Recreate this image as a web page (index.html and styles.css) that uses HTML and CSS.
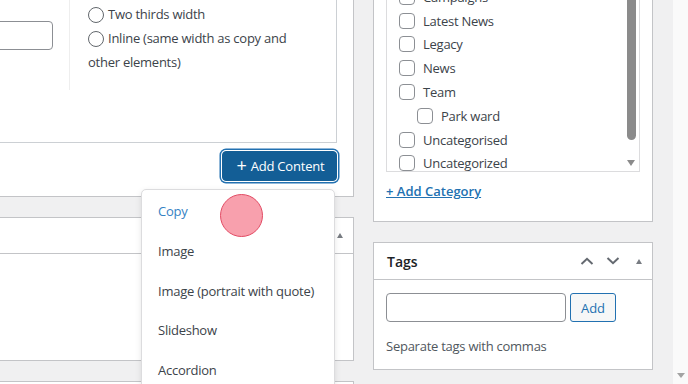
FILE: index.html
```html
<!DOCTYPE html>
<html lang="en">
<head>
<meta charset="utf-8">
<title>Edit Post</title>
<link rel="stylesheet" href="styles.css">
</head>
<body>
<div class="screen">
  <div class="wrap">
    <div class="main">
      <div class="acf">
        <div class="layout">
          <div class="field-row">
            <div class="field-input"><input class="text-input" type="text"></div>
            <div class="field-radio">
              <ul class="radio-list">
                <li><span class="radio"></span>Two thirds width</li>
                <li><span class="radio"></span>Inline (same width as copy and other elements)</li>
              </ul>
            </div>
          </div>
        </div>
        <div class="actions">
          <button class="btn-primary" type="button"><span class="plus">+</span>Add Content</button>
          <div class="menu">
            <div class="menu-item active">Copy</div>
            <div class="menu-item">Image</div>
            <div class="menu-item">Image (portrait with quote)</div>
            <div class="menu-item">Slideshow</div>
            <div class="menu-item">Accordion</div>
          </div>
        </div>
      </div>
      <div class="postbox pb2">
        <div class="pb-head"><span class="tri-up"></span></div>
        <div class="pb-body"></div>
      </div>
      <div class="postbox pb3">
        <div class="pb-head"></div>
      </div>
    </div>
    <div class="side">
      <div class="postbox cats">
        <div class="cat-list">
          <ul class="cat-items">
            <li><span class="cb"></span>Campaigns</li>
            <li><span class="cb"></span>Latest News</li>
            <li><span class="cb"></span>Legacy</li>
            <li><span class="cb"></span>News</li>
            <li><span class="cb"></span>Team</li>
            <li class="child"><span class="cb"></span>Park ward</li>
            <li><span class="cb"></span>Uncategorised</li>
            <li><span class="cb"></span>Uncategorized</li>
          </ul>
          <div class="cat-scroll">
            <div class="thumb"></div>
            <span class="tri-down"></span>
          </div>
        </div>
        <a class="add-cat" href="#">+ Add Category</a>
      </div>
      <div class="postbox tags">
        <div class="tags-head">
          <h2 class="tags-title">Tags</h2>
          <span class="handle"><svg width="14" height="8" viewBox="0 0 14 8"><polyline points="1.5,7 7,1.8 12.5,7" fill="none" stroke="#646970" stroke-width="2"/></svg></span>
          <span class="handle"><svg width="14" height="8" viewBox="0 0 14 8"><polyline points="1.5,1 7,6.2 12.5,1" fill="none" stroke="#646970" stroke-width="2"/></svg></span>
          <span class="handle"><span class="tri-up"></span></span>
        </div>
        <div class="tags-body">
          <div class="tag-row">
            <input class="tag-input" type="text">
            <button class="btn-secondary" type="button">Add</button>
          </div>
          <p class="howto">Separate tags with commas</p>
        </div>
      </div>
    </div>
  </div>
  <div class="scrollbar"><span class="sb-down"></span></div>
</div>
<div class="click-dot"></div>
</body>
</html>
```

FILE: styles.css
```css
* { box-sizing: border-box; }
html, body { margin: 0; padding: 0; }
body {
  width: 688px;
  height: 384px;
  overflow: hidden;
  background: #f0f0f1;
  font-family: "Open Sans", "Noto Sans", sans-serif;
  font-size: 13px;
  letter-spacing: -0.25px;
  color: #3c434a;
  position: relative;
}
.screen { display: flex; height: 384px; }
.wrap {
  flex: 1;
  display: flex;
  align-items: flex-start;
  gap: 19px;
  padding-right: 20px;
  margin-left: -100px;
}
.main { width: 454px; flex: none; margin-top: -40px; }
.side { width: 280px; flex: none; margin-top: -40px; }

/* ACF flexible content */
.acf {
  background: #fff;
  border: 1px solid #c3c4c7;
  padding: 12px 16px 15px 12px;
}
.layout {
  border: 1px solid #ccd0d4;
  padding-bottom: 52px;
  background: #fff;
}
.field-row { display: flex; height: 116px; }
.field-input {
  width: 156px;
  flex: none;
  border-right: 1px solid #eeeeee;
  padding: 47px 16px 0 12px;
}
.text-input {
  display: block;
  width: 100%;
  height: 29px;
  border: 1px solid #8c8f94;
  border-radius: 4px;
  background: #fff;
}
.field-radio { padding: 28px 0 0 18px; }
.radio-list {
  list-style: none;
  margin: 0;
  padding: 0;
  width: 212px;
  line-height: 24px;
}
.radio {
  display: inline-block;
  width: 16px;
  height: 16px;
  border: 1px solid #62676c;
  border-radius: 50%;
  vertical-align: -4px;
  margin-right: 4px;
}
.actions {
  display: flex;
  justify-content: flex-end;
  margin-top: 8px;
  position: relative;
}
.btn-primary {
  width: 115px;
  height: 30px;
  padding: 0 0 0 2px;
  background: #135e96;
  border: 1px solid #135e96;
  color: #fff;
  border-radius: 4px;
  font: inherit;
  font-size: 13px;
  letter-spacing: -0.2px;
  box-shadow: 0 0 0 1px #fff, 0 0 0 2.5px #2271b1;
  display: flex;
  align-items: center;
  justify-content: center;
}
.plus {
  font-size: 18px;
  line-height: 18px;
  margin-right: 4px;
  margin-top: -2px;
}
.menu {
  position: absolute;
  top: 38px;
  right: 2px;
  width: 194px;
  background: #fff;
  border: 1px solid #dcdcde;
  border-radius: 5px;
  box-shadow: 0 2px 6px rgba(0, 0, 0, 0.1);
  padding-top: 2px;
  z-index: 5;
}
.menu-item {
  padding: 0 16px;
  height: 39.75px;
  line-height: 39.75px;
  white-space: nowrap;
}
.menu-item.active { color: #3582c4; }

/* postboxes */
.postbox {
  background: #fff;
  border: 1px solid #c3c4c7;
  margin-top: 20px;
}
.pb-head {
  height: 36px;
  border-bottom: 1px solid #c3c4c7;
  display: flex;
  align-items: center;
  justify-content: flex-end;
  padding-right: 10px;
}
.pb-body { height: 106px; }
.tri-up {
  display: block;
  width: 0;
  height: 0;
  border-left: 3.5px solid transparent;
  border-right: 3.5px solid transparent;
  border-bottom: 5px solid #787c82;
}

/* categories */
.side .cats { margin-top: 0; padding: 10px 12px 20px; }
.cat-list {
  display: flex;
  height: 201px;
  border: 1px solid #dcdcde;
  overflow: hidden;
}
.cat-items {
  flex: 1;
  list-style: none;
  margin: 0;
  padding: 13px 0 0 12px;
}
.cat-items li {
  height: 23.8px;
  display: flex;
  align-items: center;
  white-space: nowrap;
}
.cat-items li.child { padding-left: 18px; }
.cb {
  width: 16px;
  height: 16px;
  flex: none;
  border: 1px solid #8c8f94;
  border-radius: 4px;
  margin-right: 8px;
  background: #fff;
}
.cat-scroll {
  width: 13px;
  flex: none;
  display: flex;
  flex-direction: column;
  padding-left: 1px;
}
.thumb {
  width: 9px;
  height: 168px;
  flex: none;
  background: #8b8b8b;
  border-radius: 5px;
}
.tri-down {
  display: block;
  width: 0;
  height: 0;
  margin-top: 20px;
  border-left: 4.5px solid transparent;
  border-right: 4.5px solid transparent;
  border-top: 6px solid #8b8b8b;
}
.add-cat {
  display: block;
  margin-top: 9px;
  line-height: 20px;
  font-weight: 600;
  letter-spacing: 0;
  color: #2271b1;
  text-decoration: underline;
}

/* tags */
.tags-head {
  height: 37px;
  border-bottom: 1px solid #c3c4c7;
  display: flex;
  align-items: center;
  padding-left: 13px;
}
.tags-title {
  flex: 1;
  margin: 0;
  font-size: 14px;
  font-weight: 600;
  letter-spacing: 0;
  color: #1d2327;
}
.handle {
  width: 26px;
  height: 26px;
  display: flex;
  align-items: center;
  justify-content: center;
}
.tags-body { padding: 13px 12px; }
.tag-row { display: flex; gap: 4px; }
.tag-input {
  width: 180px;
  height: 29px;
  border: 1px solid #8c8f94;
  border-radius: 4px;
  background: #fff;
}
.btn-secondary {
  width: 46px;
  height: 29px;
  padding: 0;
  border: 1px solid #2271b1;
  border-radius: 3px;
  background: #f6f7f7;
  color: #2271b1;
  font: inherit;
  font-size: 13px;
}
.howto {
  margin: 14px 0 0;
  line-height: 20px;
  color: #50575e;
}

/* browser scrollbar */
.scrollbar {
  width: 15px;
  flex: none;
  background: #fafafa;
  display: flex;
  flex-direction: column;
  justify-content: flex-end;
  align-items: center;
  padding-bottom: 6px;
}
.sb-down {
  display: block;
  width: 0;
  height: 0;
  border-left: 4.5px solid transparent;
  border-right: 4.5px solid transparent;
  border-top: 5px solid #a3a3a3;
}

/* click indicator */
.click-dot {
  position: absolute;
  left: 220px;
  top: 194px;
  width: 43px;
  height: 43px;
  border-radius: 50%;
  background: #f8a0ad;
  border: 1.5px solid #e24b64;
  z-index: 10;
}
```
